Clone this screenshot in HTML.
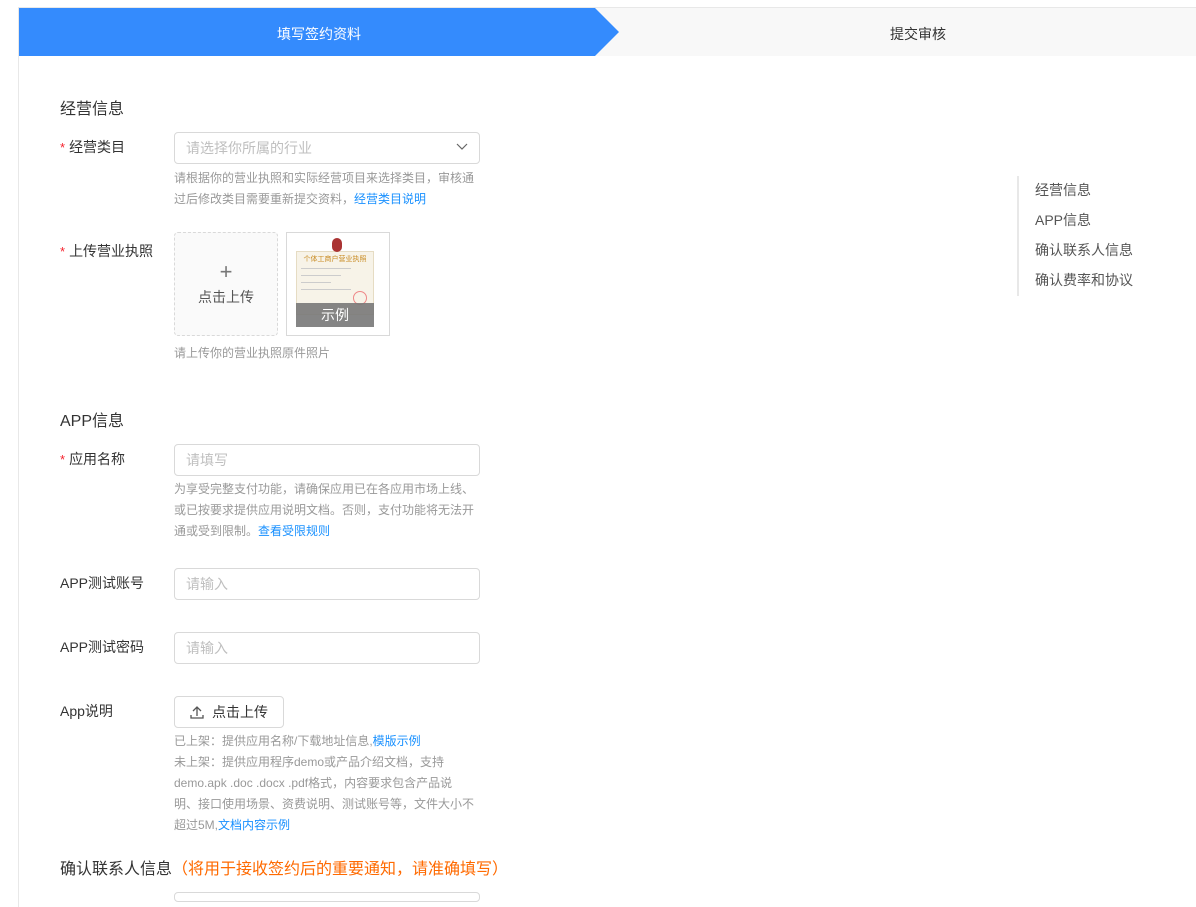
<!DOCTYPE html>
<html><head><meta charset="utf-8"><style>
*{margin:0;padding:0;box-sizing:border-box}
body{width:1196px;height:896px;overflow:hidden;background:#fff;font-family:"Liberation Sans","Noto Sans CJK SC",sans-serif;color:#333;position:relative}
.a{position:absolute}
.frame{left:18px;top:7px;width:1178px;height:900px;border-left:1px solid #e8e8e8;border-top:1px solid #e8e8e8}
.lbl{font-size:14px;color:#333;line-height:20px}
.req::before{content:"*";color:#f5222d;margin-right:4px;font-size:13px}
.inp{width:306px;height:32px;border:1px solid #d9d9d9;border-radius:4px;font-size:14px;color:#bfbfbf;padding:6px 11px;line-height:18px}
.help{font-size:12px;color:#999;line-height:21px;width:310px}
.help a{color:#1890ff;text-decoration:none}
.h{font-size:16px;color:#333}
.nav{font-size:14px;color:#555;line-height:20px}
</style></head><body>
<div class="a frame"></div>
<div class="a" style="left:19px;top:8px;width:1177px;height:48px;background:#f8f8f8"></div>
<svg class="a" style="left:19px;top:8px" width="602" height="48"><polygon points="0,0 576,0 600,24 576,48 0,48" fill="#348bfd"/></svg>
<div class="a" style="left:19px;top:24px;width:600px;text-align:center;font-size:14px;color:#fff">填写签约资料</div>
<div class="a" style="left:620px;top:24px;width:596px;text-align:center;font-size:14px;color:#333">提交审核</div>

<div class="a h" style="left:60px;top:95px">经营信息</div>
<div class="a lbl req" style="left:60px;top:137px">经营类目</div>
<div class="a inp" style="left:174px;top:132px">请选择你所属的行业</div>
<svg class="a" style="left:456px;top:143px" width="12" height="8"><path d="M1 1 L6 6 L11 1" fill="none" stroke="#666" stroke-width="1.2"/></svg>
<div class="a help" style="left:174px;top:168px">请根据你的营业执照和实际经营项目来选择类目，审核通过后修改类目需要重新提交资料，<a>经营类目说明</a></div>

<div class="a lbl req" style="left:60px;top:241px">上传营业执照</div>
<div class="a" style="left:174px;top:232px;width:104px;height:104px;border:1px dashed #d9d9d9;border-radius:4px;background:#fafafa;text-align:center;color:#555">
<div style="font-size:22px;line-height:22px;margin-top:28px;color:#777">+</div><div style="font-size:14px;margin-top:4px">点击上传</div></div>
<div class="a" style="left:286px;top:232px;width:104px;height:104px;border:1px solid #d9d9d9;background:#fff">
<div class="a" style="left:9px;top:18px;width:78px;height:64px;background:#f7f3e8;border:1px solid #e6dcc3"></div>
<div class="a" style="left:45px;top:5px;width:10px;height:14px;background:#a33;border-radius:5px"></div>
<div class="a" style="left:12px;top:22px;width:72px;text-align:center;font-size:7px;color:#c88a20;line-height:9px;white-space:nowrap;overflow:hidden">个体工商户营业执照</div>
<div class="a" style="left:14px;top:35px;width:50px;height:0;border-top:1px solid #ccc"></div>
<div class="a" style="left:14px;top:42px;width:40px;height:0;border-top:1px solid #ccc"></div>
<div class="a" style="left:14px;top:49px;width:30px;height:0;border-top:1px solid #ccc"></div>
<div class="a" style="left:14px;top:56px;width:50px;height:0;border-top:1px solid #ccc"></div>
<div class="a" style="left:66px;top:58px;width:14px;height:14px;border:1px solid #e88;border-radius:7px"></div>
<div class="a" style="left:9px;top:70px;width:78px;height:24px;background:rgba(120,120,120,.9);color:#fff;text-align:center;font-size:14px;line-height:24px">示例</div>
</div>
<div class="a help" style="left:174px;top:343px">请上传你的营业执照原件照片</div>

<div class="a h" style="left:60px;top:407px">APP信息</div>
<div class="a lbl req" style="left:60px;top:449px">应用名称</div>
<div class="a inp" style="left:174px;top:444px">请填写</div>
<div class="a help" style="left:174px;top:479px">为享受完整支付功能，请确保应用已在各应用市场上线、或已按要求提供应用说明文档。否则，支付功能将无法开通或受到限制。<a>查看受限规则</a></div>

<div class="a lbl" style="left:60px;top:573px">APP测试账号</div>
<div class="a inp" style="left:174px;top:568px">请输入</div>
<div class="a lbl" style="left:60px;top:637px">APP测试密码</div>
<div class="a inp" style="left:174px;top:632px">请输入</div>

<div class="a lbl" style="left:60px;top:701px">App说明</div>
<div class="a" style="left:174px;top:696px;width:110px;height:32px;border:1px solid #d9d9d9;border-radius:4px;font-size:14px;color:#333;line-height:30px;padding-left:37px">点击上传</div>
<svg class="a" style="left:190px;top:705px" width="14" height="14"><path d="M7 11 V2 M3 6 L7 2 L11 6 M1 10 V13 H13 V10" fill="none" stroke="#555" stroke-width="1.3"/></svg>
<div class="a help" style="left:174px;top:731px;width:302px">已上架：提供应用名称/下载地址信息,<a>模版示例</a><br>未上架：提供应用程序demo或产品介绍文档，支持<br>demo.apk .doc .docx .pdf格式，内容要求包含产品说<br>明、接口使用场景、资费说明、测试账号等，文件大小不<br>超过5M,<a>文档内容示例</a></div>

<div class="a h" style="left:60px;top:855px">确认联系人信息<span style="color:#ff6a00">（将用于接收签约后的重要通知，请准确填写）</span></div>
<div class="a" style="left:174px;top:892px;width:306px;height:10px;border:1px solid #d9d9d9;border-radius:4px"></div>

<div class="a" style="left:1017px;top:176px;width:2px;height:120px;background:#e8e8e8"></div>
<div class="a nav" style="left:1035px;top:180px">经营信息</div>
<div class="a nav" style="left:1035px;top:210px">APP信息</div>
<div class="a nav" style="left:1035px;top:240px">确认联系人信息</div>
<div class="a nav" style="left:1035px;top:270px">确认费率和协议</div>
</body></html>
